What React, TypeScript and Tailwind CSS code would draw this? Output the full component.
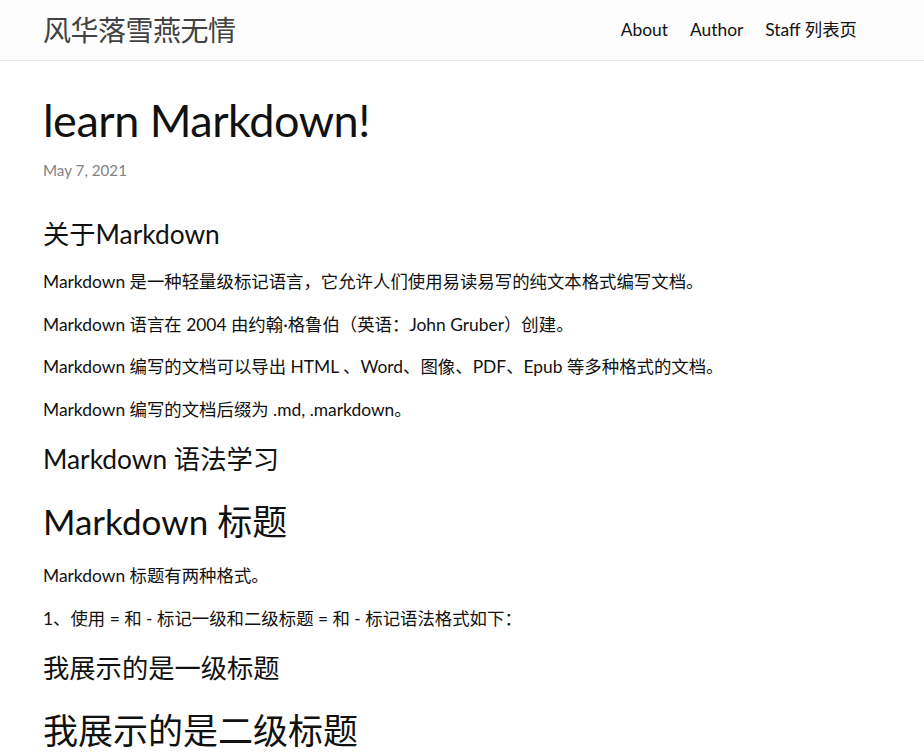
import React from "react";

const font = "font-['Lato','Noto_Sans_CJK_SC',sans-serif]";

export default function App() {
  return (
    <div className={`min-h-[756px] bg-white text-[#111] ${font}`}>
      <header className="h-[61px] border-b border-[#e8e8e8] bg-[#fdfdfd]">
        <div className="flex h-[60px] items-center justify-between pl-[43px] pr-[67px]">
          <a className="text-[28px] leading-[60px] tracking-[-0.5px] text-[#424242]">风华落雪燕无情</a>
          <nav className="flex gap-[22px] text-[17.4px] text-[#111]">
            <a>About</a>
            <a>Author</a>
            <a>Staff 列表页</a>
          </nav>
        </div>
      </header>
      <main className="px-[43px]">
        <h1 className="mt-[29px] text-[45px] leading-[60px] tracking-[-0.5px]">learn Markdown!</h1>
        <p className="mt-[9px] text-[15.2px] leading-[22px] text-[#828282]">May 7, 2021</p>
        <h3 className="mt-[35px] text-[26.3px] leading-[36px]">关于Markdown</h3>
        <p className="mt-[16px] text-[17.4px] leading-[27.5px]">Markdown 是一种轻量级标记语言，它允许人们使用易读易写的纯文本格式编写文档。</p>
        <p className="mt-[15px] text-[17.4px] leading-[27.5px]">Markdown 语言在 2004 由约翰·格鲁伯（英语：John Gruber）创建。</p>
        <p className="mt-[15px] text-[17.4px] leading-[27.5px]">Markdown 编写的文档可以导出 HTML 、Word、图像、PDF、Epub 等多种格式的文档。</p>
        <p className="mt-[15px] text-[17.4px] leading-[27.5px]">Markdown 编写的文档后缀为 .md, .markdown。</p>
        <h3 className="mt-[18px] text-[26.3px] leading-[36px]">Markdown 语法学习</h3>
        <h2 className="mt-[20px] text-[35px] leading-[48px]">Markdown 标题</h2>
        <p className="mt-[17px] text-[17.4px] leading-[27.5px]">Markdown 标题有两种格式。</p>
        <p className="mt-[15px] text-[17.4px] leading-[27.5px]">1、使用 = 和 - 标记一级和二级标题 = 和 - 标记语法格式如下：</p>
        <h3 className="mt-[18px] text-[26.3px] leading-[36px]">我展示的是一级标题</h3>
        <h2 className="mt-[20px] text-[35px] leading-[48px]">我展示的是二级标题</h2>
      </main>
    </div>
  );
}
